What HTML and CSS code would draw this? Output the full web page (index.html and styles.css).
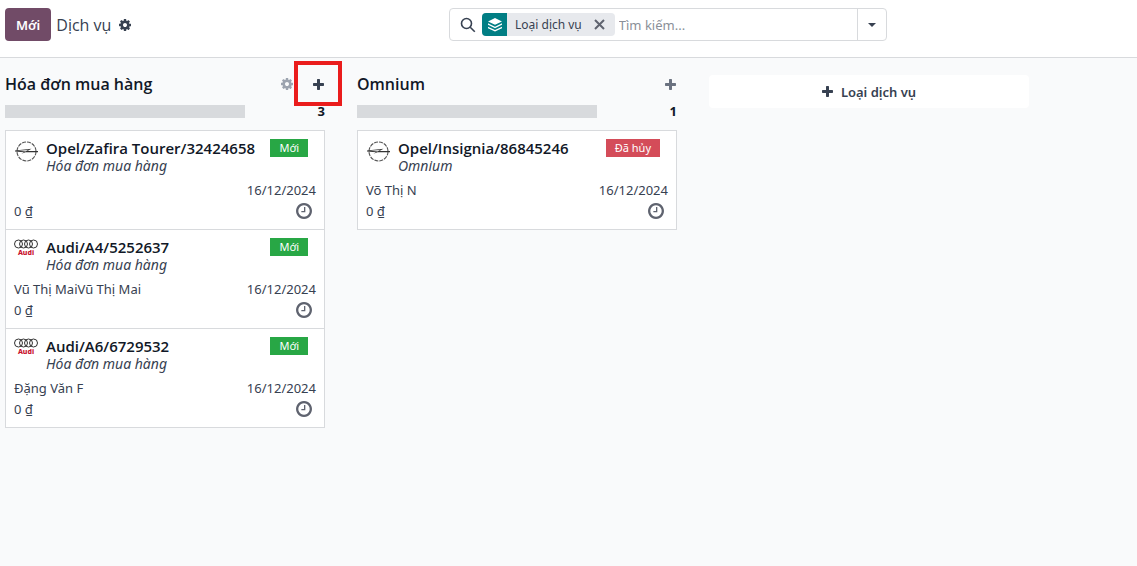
FILE: index.html
```html
<!DOCTYPE html>
<html lang="vi">
<head>
<meta charset="utf-8">
<meta name="viewport" content="width=device-width, initial-scale=1">
<title>Dịch vụ</title>
<link rel="stylesheet" href="styles.css">
</head>
<body>
<svg class="sprite" aria-hidden="true">
  <symbol id="cog" viewBox="128 128 1536 1536"><path d="M1152 896q0-106-75-181t-181-75-181 75-75 181 75 181 181 75 181-75 75-181zm512-109v222q0 12-8 23t-20 13l-185 28q-19 54-39 91 35 50 107 138 10 12 10 25t-9 23q-27 37-99 108t-94 71q-12 0-26-9l-138-108q-44 23-91 38-16 136-29 186-7 28-36 28h-222q-14 0-24.5-8.5t-11.5-21.5l-28-184q-49-16-90-37l-141 107q-10 9-25 9-14 0-25-11-126-114-165-168-7-10-7-23 0-12 8-23 15-21 51-66.5t54-70.5q-27-50-41-99l-183-27q-13-2-21-12.5t-8-23.5v-222q0-12 8-23t19-13l186-28q14-46 39-92-40-57-107-138-10-12-10-24 0-10 9-23 26-36 98.5-107.5t94.5-71.5q13 0 26 10l138 107q44-23 91-38 16-136 29-186 7-28 36-28h222q14 0 24.5 8.5t11.5 21.5l28 184q49 16 90 37l142-107q9-9 24-9 13 0 25 10 129 119 165 170 7 8 7 22 0 12-8 23-15 21-51 66.5t-54 70.5q26 50 41 98l183 28q13 2 21 12.5t8 23.5z"/></symbol>
  <symbol id="clock" viewBox="128 128 1536 1536"><path d="M1024 544v448q0 14-9 23t-23 9h-320q-14 0-23-9t-9-23v-64q0-14 9-23t23-9h224v-352q0-14 9-23t23-9h64q14 0 23 9t9 23zm416 352q0-148-73-273t-198-198-273-73-273 73-198 198-73 273 73 273 198 198 273 73 273-73 198-198 73-273zm224 0q0 209-103 385.5t-279.5 279.5-385.5 103-385.5-103-279.5-279.5-103-385.5 103-385.5 279.5-279.5 385.5-103 385.5 103 279.5 279.5 103 385.5z"/></symbol>
  <symbol id="plus" viewBox="0 0 11 11"><path d="M4.7 0h1.6q.7 0 .7.7V4h3.3q.7 0 .7.7v1.6q0 .7-.7.7H7v3.3q0 .7-.7.7H4.700q-.7 0-.7-.7V7H.7Q0 7 0 6.300V4.700Q0 4 .7 4H4V.7Q4 0 4.700 0z"/></symbol>
  <symbol id="opel" viewBox="0 0 24 24"><circle cx="12.500" cy="12.500" r="9.500" fill="none" stroke="#555" stroke-width="1.100" stroke-dasharray="4 1"/><path d="M1 11.400 17.500 9.700 13.500 12H24v1.300H11.500L7.500 14.700 10 13.200 1 12.600z" fill="#333"/><path d="M4 11.800 14.500 10.800 11.500 12.400z" fill="#ddd"/></symbol>
  <symbol id="rings" viewBox="0 0 24 10"><g fill="none" stroke="#333" stroke-width="1"><circle cx="4.500" cy="5" r="4"/><circle cx="9.500" cy="5" r="4"/><circle cx="14.500" cy="5" r="4"/><circle cx="19.500" cy="5" r="4"/></g></symbol>
</svg>

<header class="control-panel">
  <div class="breadcrumb">
    <button class="btn-new" type="button">Mới</button>
    <h1 class="page-title">Dịch vụ</h1>
    <button class="icon-btn" type="button" aria-label="Cài đặt"><svg class="icon-cog"><use href="#cog"/></svg></button>
  </div>
  <div class="search" role="search">
    <svg class="icon-search" viewBox="0 0 16 16"><circle cx="6.500" cy="6.500" r="5" /><path d="m10.200 10.200 4.600 4.600"/></svg>
    <div class="facet">
      <span class="facet-icon"><svg class="icon-layers" viewBox="0 0 14 14"><path d="M7 0 14 3.400 7 6.800 0 3.400zM0 5.300l7 3.400 7-3.400v1.500l-7 3.400-7-3.400zM0 8.700l7 3.400 7-3.400v1.500l-7 3.400-7-3.400z"/></svg></span>
      <span class="facet-label">Loại dịch vụ</span>
      <button class="icon-btn facet-remove" type="button" aria-label="Xóa"><svg class="icon-x" viewBox="0 0 11 11"><path d="m1 1 9 9M10 1 1 10"/></svg></button>
    </div>
    <input class="search-input" type="text" placeholder="Tìm kiếm..." aria-label="Tìm kiếm">
    <button class="search-toggle" type="button" aria-label="Bộ lọc"><svg class="icon-caret" viewBox="0 0 8 4"><path d="M0 0h8L4 4z"/></svg></button>
  </div>
</header>

<main class="board">
  <section class="column">
    <div class="column-head">
      <h2 class="column-title">Hóa đơn mua hàng</h2>
      <button class="icon-btn muted" type="button" aria-label="Cài đặt cột"><svg class="icon-cog"><use href="#cog"/></svg></button>
      <button class="icon-btn add highlighted" type="button" aria-label="Thêm"><svg class="icon-plus"><use href="#plus"/></svg></button>
    </div>
    <div class="column-progress"><div class="bar"></div><b class="count">3</b></div>
    <div class="cards">
      <article class="card">
        <div class="card-head">
          <svg class="logo-opel"><use href="#opel"/></svg>
          <div class="card-name"><strong class="card-title">Opel/Zafira Tourer/32424658</strong><em class="card-type">Hóa đơn mua hàng</em></div>
          <span class="badge new">Mới</span>
        </div>
        <div class="card-row"><span></span><span>16/12/2024</span></div>
        <div class="card-row"><span>0 ₫</span><button class="icon-btn activity" type="button" aria-label="Hoạt động"><svg class="icon-clock"><use href="#clock"/></svg></button></div>
      </article>
      <article class="card">
        <div class="card-head">
          <div class="logo-audi"><svg class="rings"><use href="#rings"/></svg>Audi</div>
          <div class="card-name"><strong class="card-title">Audi/A4/5252637</strong><em class="card-type">Hóa đơn mua hàng</em></div>
          <span class="badge new">Mới</span>
        </div>
        <div class="card-row"><span>Vũ Thị MaiVũ Thị Mai</span><span>16/12/2024</span></div>
        <div class="card-row"><span>0 ₫</span><button class="icon-btn activity" type="button" aria-label="Hoạt động"><svg class="icon-clock"><use href="#clock"/></svg></button></div>
      </article>
      <article class="card">
        <div class="card-head">
          <div class="logo-audi"><svg class="rings"><use href="#rings"/></svg>Audi</div>
          <div class="card-name"><strong class="card-title">Audi/A6/6729532</strong><em class="card-type">Hóa đơn mua hàng</em></div>
          <span class="badge new">Mới</span>
        </div>
        <div class="card-row"><span>Đặng Văn F</span><span>16/12/2024</span></div>
        <div class="card-row"><span>0 ₫</span><button class="icon-btn activity" type="button" aria-label="Hoạt động"><svg class="icon-clock"><use href="#clock"/></svg></button></div>
      </article>
    </div>
  </section>

  <section class="column">
    <div class="column-head">
      <h2 class="column-title">Omnium</h2>
      <button class="icon-btn add" type="button" aria-label="Thêm"><svg class="icon-plus"><use href="#plus"/></svg></button>
    </div>
    <div class="column-progress"><div class="bar"></div><b class="count">1</b></div>
    <div class="cards">
      <article class="card">
        <div class="card-head">
          <svg class="logo-opel"><use href="#opel"/></svg>
          <div class="card-name"><strong class="card-title">Opel/Insignia/86845246</strong><em class="card-type">Omnium</em></div>
          <span class="badge cancelled">Đã hủy</span>
        </div>
        <div class="card-row"><span>Võ Thị N</span><span>16/12/2024</span></div>
        <div class="card-row"><span>0 ₫</span><button class="icon-btn activity" type="button" aria-label="Hoạt động"><svg class="icon-clock"><use href="#clock"/></svg></button></div>
      </article>
    </div>
  </section>

  <section class="column">
    <button class="add-column" type="button"><svg class="icon-plus"><use href="#plus"/></svg>Loại dịch vụ</button>
  </section>
</main>
</body>
</html>
```
FILE: styles.css
```css
* { box-sizing: border-box; }

body {
  margin: 0;
  min-height: 100vh;
  background: #f9fafb;
  color: #374151;
  font: 13px/20px "Noto Sans", "Open Sans", sans-serif;
}

button, input { font: inherit; color: inherit; }
h1, h2 { margin: 0; }
svg { display: block; flex: none; fill: currentColor; }
.sprite { position: absolute; width: 0; height: 0; }

.icon-btn {
  display: flex;
  align-items: center;
  justify-content: center;
  padding: 0;
  border: 0;
  background: none;
}

.icon-cog { width: 12px; height: 12px; }
.icon-plus { width: 11px; height: 11px; }
.icon-clock { width: 16px; height: 16px; }
.icon-caret { width: 8px; height: 4px; }
.icon-layers { width: 14px; height: 14px; }
.icon-search { width: 16px; height: 16px; fill: none; stroke: currentColor; stroke-width: 1.6; }
.icon-x { width: 11px; height: 11px; stroke: #5f636f; stroke-width: 2; }

/* Control panel */
.control-panel {
  display: grid;
  grid-template-columns: 444px minmax(0, 438px);
  padding: 8px 5px 16px;
  background: #fff;
  border-bottom: 1px solid #d8dadd;
}

.breadcrumb { display: flex; align-items: center; }

.btn-new {
  height: 33px;
  padding: 0 11px;
  margin-right: 5px;
  border: 0;
  border-radius: 4px;
  background: #714b67;
  color: #fff;
  font-weight: 600;
}

.page-title {
  margin-right: 8px;
  font-family: "Open Sans", "Noto Sans", sans-serif;
  font-size: 16px;
  font-weight: 400;
}

.search {
  display: flex;
  align-items: center;
  height: 33px;
  border: 1px solid #d8dadd;
  border-radius: 4px;
}

.search .icon-search { margin: 0 6px 0 10px; }

.facet {
  display: flex;
  align-items: center;
  height: 23px;
  flex: none;
  overflow: hidden;
  border-radius: 4px;
  background: #e7e9ed;
  font-size: 12px;
}

.facet-icon {
  display: flex;
  align-items: center;
  justify-content: center;
  width: 25px;
  height: 23px;
  background: #017e84;
  color: #fff;
}

.facet-label { padding: 0 12px 0 8px; }
.facet-remove { margin-right: 10px; }

.search-input {
  flex: 1;
  min-width: 0;
  padding: 0 4px;
  border: 0;
  outline: 0;
  background: none;
}

.search-input::placeholder { color: #8a8f98; opacity: 1; }

.search-toggle {
  display: flex;
  align-items: center;
  justify-content: center;
  align-self: stretch;
  width: 29px;
  padding: 0;
  border: 0;
  border-left: 1px solid #d8dadd;
  background: none;
}

/* Board */
.board { display: flex; gap: 32px; padding: 16px 5px; }
.column { flex: 0 0 320px; }

.column-head { display: flex; align-items: center; height: 20px; color: #6b7280; }

.column-title {
  margin-right: auto;
  color: #111827;
  font-family: "Open Sans", "Noto Sans", sans-serif;
  font-size: 16px;
  line-height: 20px;
  font-weight: 600;
}

.muted { margin-right: 20px; color: #9ca3af; }
.add { position: relative; margin-right: 1px; }
.highlighted { color: #374151; }

.highlighted::after {
  content: "";
  position: absolute;
  inset: -18px -18px -16px -19px;
  border: 4px solid #ea1c1c;
}

.column-progress {
  display: flex;
  align-items: center;
  justify-content: space-between;
  height: 20px;
  margin: 7px 0 9px;
}

.bar { width: 75%; height: 13px; background: #d8dadd; }
.count { color: #111827; }

/* Cards */
.card {
  padding: 8px;
  margin-bottom: -1px;
  background: #fff;
  border: 1px solid #d8dadd;
}

.card-head { display: flex; align-items: flex-start; height: 40px; }
.card-name { flex: 1; margin-left: 8px; white-space: nowrap; }

.card-title {
  display: block;
  color: #111827;
  font-family: "Open Sans", "Noto Sans", sans-serif;
  font-size: 15px;
  line-height: 18px;
  font-weight: 600;
}

.card-type { display: block; font-size: 14px; line-height: 18px; }
.logo-opel { width: 24px; height: 24px; }

.logo-audi {
  width: 24px;
  color: #c8102e;
  font-size: 7px;
  line-height: 8px;
  font-weight: 800;
  text-align: center;
}

.rings { width: 24px; height: 10px; margin-top: 1px; }

.badge {
  padding: 0 9px;
  margin-right: 8px;
  color: #fff;
  font-size: 11px;
  line-height: 18px;
}

.new { background: #28a745; }
.cancelled { background: #d44c59; }

.card-row {
  display: flex;
  align-items: center;
  justify-content: space-between;
  height: 21px;
}

.activity { margin-right: 4px; color: #5f636f; }

.add-column {
  display: flex;
  align-items: center;
  justify-content: center;
  gap: 8px;
  width: 100%;
  height: 33px;
  margin-top: 1px;
  border: 0;
  border-radius: 4px;
  background: #fff;
  font-weight: 600;
}
```
